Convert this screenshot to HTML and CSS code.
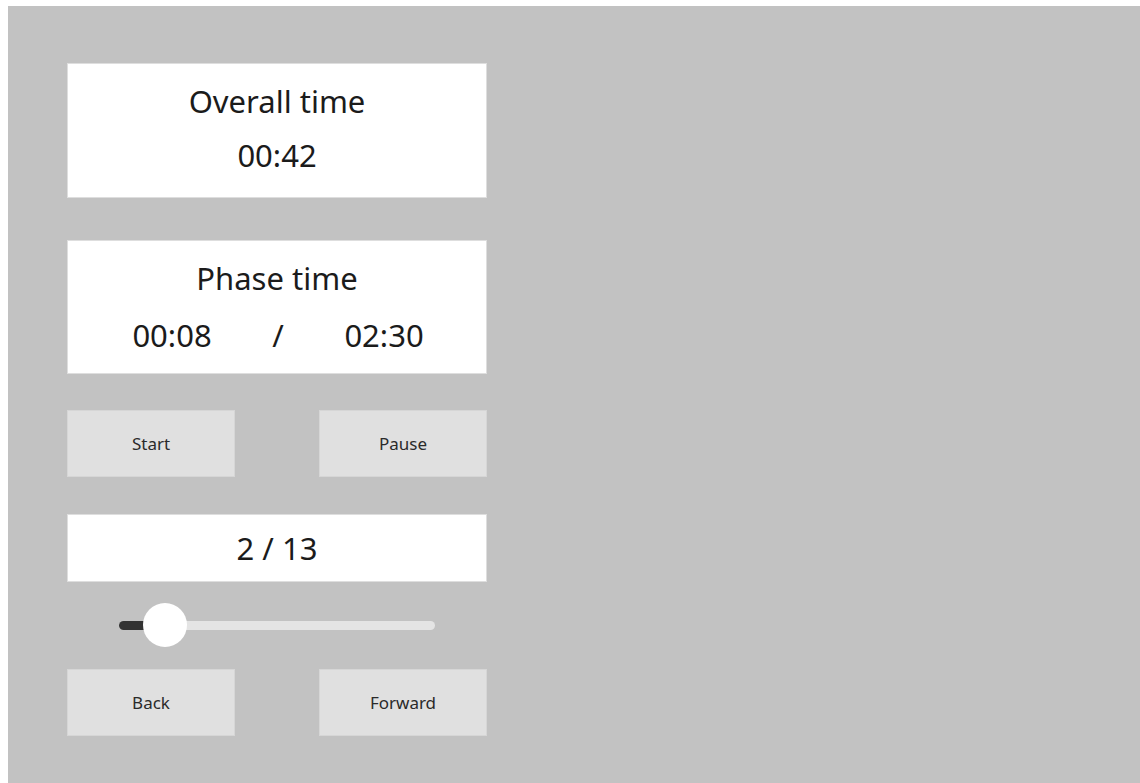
FILE: index.html
```html
<!DOCTYPE html>
<html lang="en">
<head>
<meta charset="utf-8">
<title>Timer</title>
<link rel="stylesheet" href="styles.css">
</head>
<body>
<div class="screen">
  <div class="panel">
    <section class="card card-overall">
      <div class="card-title">Overall time</div>
      <div class="card-value">00:42</div>
    </section>

    <section class="card card-phase">
      <div class="card-title">Phase time</div>
      <div class="phase-row">
        <span class="phase-cell">00:08</span>
        <span class="phase-cell">/</span>
        <span class="phase-cell">02:30</span>
      </div>
    </section>

    <div class="button-row row-controls">
      <button class="btn">Start</button>
      <button class="btn">Pause</button>
    </div>

    <section class="card card-step">2 / 13</section>

    <div class="slider">
      <div class="slider-track">
        <div class="slider-fill" style="width: 8.33%"></div>
        <div class="slider-thumb" style="left: 8.33%"></div>
      </div>
    </div>

    <div class="button-row row-nav">
      <button class="btn">Back</button>
      <button class="btn">Forward</button>
    </div>
  </div>
</div>
</body>
</html>
```

FILE: styles.css
```css
html, body {
  margin: 0;
  padding: 0;
  background: #ffffff;
}

body {
  font-family: "Noto Sans", "Open Sans", "DejaVu Sans", sans-serif;
  color: #1b1b1b;
}

.screen {
  margin: 6px 0 0 8px;
  height: 777px;
  background: #c2c2c2;
  padding: 57px 0 0 59px;
  box-sizing: border-box;
}

.panel {
  width: 420px;
  display: flex;
  flex-direction: column;
}

/* white read-out cards */
.card {
  background: #ffffff;
  border: 1px solid #dedede;
  box-sizing: border-box;
  text-align: center;
  font-size: 31px;
}

.card-overall {
  height: 135px;
  padding-top: 10px;
  line-height: 54px;
}

.card-phase {
  height: 134px;
  margin-top: 42px;
  padding-top: 9px;
  line-height: 57px;
}

.phase-row {
  display: flex;
  justify-content: center;
  padding-left: 2px;
}

.phase-cell {
  width: 106px;
  text-align: center;
}

.card-step {
  height: 68px;
  margin-top: 37px;
  display: flex;
  align-items: center;
  justify-content: center;
  line-height: 1;
}

/* button pairs */
.button-row {
  display: flex;
  justify-content: space-between;
}

.row-controls {
  margin-top: 36px;
}

.row-nav {
  margin-top: 22px;
}

.btn {
  width: 168px;
  height: 67px;
  background: #e0e0e0;
  border: 1px solid #d6d6d6;
  font-family: "Noto Sans", "Open Sans", sans-serif;
  font-size: 17px;
  color: #2a2a2a;
  padding: 0;
  cursor: pointer;
}

/* step slider */
.slider {
  margin-top: 21px;
  height: 44px;
  padding: 0 52px;
  display: flex;
  align-items: center;
}

.slider-track {
  position: relative;
  flex: 1;
  height: 9px;
  border-radius: 5px;
  background: #e4e4e4;
}

.slider-fill {
  height: 100%;
  border-radius: 5px 0 0 5px;
  background: #333333;
}

.slider-thumb {
  position: absolute;
  top: 50%;
  width: 44px;
  height: 44px;
  margin-left: -2px;
  border-radius: 50%;
  background: #ffffff;
  transform: translateY(-50%);
}
```
